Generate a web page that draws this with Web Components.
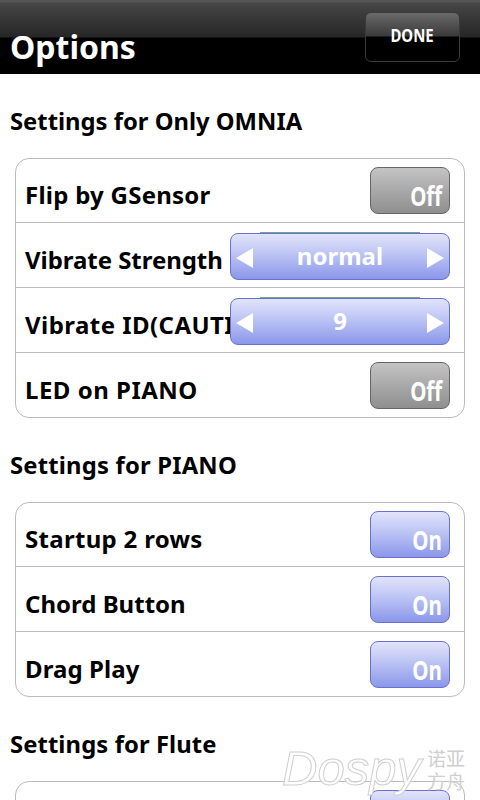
<!DOCTYPE html>
<html>
<head>
<meta charset="utf-8">
<title>Options</title>
<style>
    html, body { margin: 0; padding: 0; height: 800px; overflow: hidden; background: #fff; }
    body { font-family: "Noto Sans", "Liberation Sans", sans-serif; position: relative; }
</style>
</head>
<body>
<title-bar heading="Options" action="DONE"></title-bar>

<option-section heading="Settings for Only OMNIA">
    <option-row label="Flip by GSensor" style="--track: .25px"><flip-toggle value="Off"></flip-toggle></option-row>
    <option-row label="Vibrate Strength" style="--track: -.05px"><value-spinner value="normal"></value-spinner></option-row>
    <option-row label="Vibrate ID(CAUTION)" style="--track: .45px"><value-spinner value="9"></value-spinner></option-row>
    <option-row label="LED on PIANO" style="--track: .5px"><flip-toggle value="Off"></flip-toggle></option-row>
</option-section>

<option-section heading="Settings for PIANO" style="--track: .2px">
    <option-row label="Startup 2 rows" style="--track: .3px"><flip-toggle value="On" active></flip-toggle></option-row>
    <option-row label="Chord Button" style="--track: 0"><flip-toggle value="On" active></flip-toggle></option-row>
    <option-row label="Drag Play" style="--track: .1px"><flip-toggle value="On" active></flip-toggle></option-row>
</option-section>

<option-section heading="Settings for Flute" style="--track: .1px">
    <option-row label=""><flip-toggle value="" active></flip-toggle></option-row>
</option-section>

<forum-mark></forum-mark>

<script>
class TitleBar extends HTMLElement {
    connectedCallback() {
        this.attachShadow({ mode: 'open' });
        this.shadowRoot.innerHTML = `
            <style>
                :host {
                    display: flex;
                    justify-content: space-between;
                    height: 74px;
                    box-sizing: border-box;
                    padding: 12px 20px 0 10px;
                    background: linear-gradient(#555 0, #555 2px, #464646 3px, #262626 37px, #000 38px);
                    color: #fff;
                }
                h1 {
                    margin: 14px 0 0;
                    font-size: 32px;
                    line-height: 42px;
                    font-weight: 700;
                }
                button {
                    width: 95px;
                    height: 50px;
                    padding: 0 0 4px;
                    border: 1px solid #3a3a3a;
                    border-radius: 6px;
                    background: linear-gradient(#6a6a6a 0, #3a3a3a 23px, #000 24px);
                    color: #fff;
                    font: 700 18px "Noto Sans", "Liberation Sans", sans-serif;
                }
                button span { display: inline-block; transform: scaleX(.83); }
            </style>
            <h1>${this.getAttribute('heading')}</h1>
            <button><span>${this.getAttribute('action')}</span></button>
        `;
    }
}

class OptionSection extends HTMLElement {
    connectedCallback() {
        this.attachShadow({ mode: 'open' });
        this.shadowRoot.innerHTML = `
            <style>
                :host {
                    display: block;
                    padding: 30px 15px 0;
                    height: 344px;
                    box-sizing: border-box;
                }
                :host(:nth-of-type(2)) { height: 279px; }
                h2 {
                    margin: 0 0 20px -5px;
                    font-size: 23.8px;
                    line-height: 34px;
                    font-weight: 700;
                    letter-spacing: var(--track, 0);
                    color: #000;
                }
                .card {
                    border: 1px solid #bbb;
                    border-radius: 14px;
                    background: #fff;
                }
            </style>
            <h2>${this.getAttribute('heading')}</h2>
            <div class="card"><slot></slot></div>
        `;
    }
}

class OptionRow extends HTMLElement {
    connectedCallback() {
        this.attachShadow({ mode: 'open' });
        this.shadowRoot.innerHTML = `
            <style>
                :host {
                    display: flex;
                    align-items: center;
                    justify-content: space-between;
                    height: 65px;
                    box-sizing: border-box;
                    padding: 0 14px 0 9px;
                    border-top: 1px solid #bbb;
                }
                :host(:first-child) { border-top: 0; height: 63px; }
                span {
                    flex: 1 1 0;
                    min-width: 0;
                    white-space: nowrap;
                    font-size: 24px;
                    font-weight: 700;
                    letter-spacing: var(--track, 0);
                    color: #000;
                    padding-top: 8px;
                }
            </style>
            <span>${this.getAttribute('label')}</span>
            <slot></slot>
        `;
    }
}

class FlipToggle extends HTMLElement {
    connectedCallback() {
        this.attachShadow({ mode: 'open' });
        this.shadowRoot.innerHTML = `
            <style>
                :host {
                    display: flex;
                    align-items: flex-end;
                    justify-content: flex-end;
                    flex: none;
                    width: 80px;
                    height: 47px;
                    box-sizing: border-box;
                    padding: 0 7px 1px 0;
                    border: 1px solid #666;
                    border-radius: 8px;
                    background: linear-gradient(#c4c4c4, #a6a6a6 55%, #8f8f8f);
                    color: #fff;
                    font-size: 27px;
                    line-height: 32px;
                    font-weight: 700;
                    letter-spacing: 0;
                }
                :host([active]) {
                    border-color: #6a6fd0;
                    background: linear-gradient(#e2e4fb, #bcc4f4 45%, #8b97ea);
                }
                span { display: block; transform: scaleX(.76); transform-origin: right; }
            </style>
            <span>${this.getAttribute('value')}</span>
        `;
    }
}

class ValueSpinner extends HTMLElement {
    connectedCallback() {
        this.attachShadow({ mode: 'open' });
        this.shadowRoot.innerHTML = `
            <style>
                :host {
                    display: flex;
                    align-items: center;
                    justify-content: space-between;
                    flex: none;
                    position: relative;
                    width: 220px;
                    height: 47px;
                    margin-top: 2px;
                    box-sizing: border-box;
                    padding: 3px 5px 0;
                    border: 1px solid #6a6fd0;
                    border-radius: 8px;
                    background: linear-gradient(#e2e4fb, #bcc4f4 45%, #8b97ea);
                    color: #fff;
                    font-size: 24px;
                    font-weight: 700;
                }
                :host::before {
                    content: "";
                    position: absolute;
                    left: 29px;
                    right: 29px;
                    top: -2px;
                    height: 1px;
                    background: #6fa77f;
                }
                svg { width: 17px; height: 20px; fill: #fff; flex: none; }
                span { padding-bottom: 5px; }
            </style>
            <svg viewBox="0 0 17 20"><path d="M0 10 17 0V20Z"/></svg>
            <span>${this.getAttribute('value')}</span>
            <svg viewBox="0 0 17 20"><path d="M17 10 0 0V20Z"/></svg>
        `;
    }
}

class ForumMark extends HTMLElement {
    connectedCallback() {
        this.attachShadow({ mode: 'open' });
        this.shadowRoot.innerHTML = `
            <style>
                :host {
                    position: absolute;
                    left: 282px;
                    top: 740px;
                    display: flex;
                    gap: 6px;
                    pointer-events: none;
                }
                b {
                    font: italic 400 49px/56px "Liberation Sans", sans-serif;
                    color: rgba(255, 255, 255, .85);
                    -webkit-text-stroke: 1px #cfcfcf;
                }
                i {
                    font: 400 19px/23px "Noto Sans CJK SC", sans-serif;
                    color: #cfcfcf;
                    width: 40px;
                    margin-top: 6px;
                }
            </style>
            <b>Dospy</b>
            <i>诺亚方舟</i>
        `;
    }
}

customElements.define('title-bar', TitleBar);
customElements.define('option-section', OptionSection);
customElements.define('option-row', OptionRow);
customElements.define('flip-toggle', FlipToggle);
customElements.define('value-spinner', ValueSpinner);
customElements.define('forum-mark', ForumMark);
</script>
</body>
</html>
